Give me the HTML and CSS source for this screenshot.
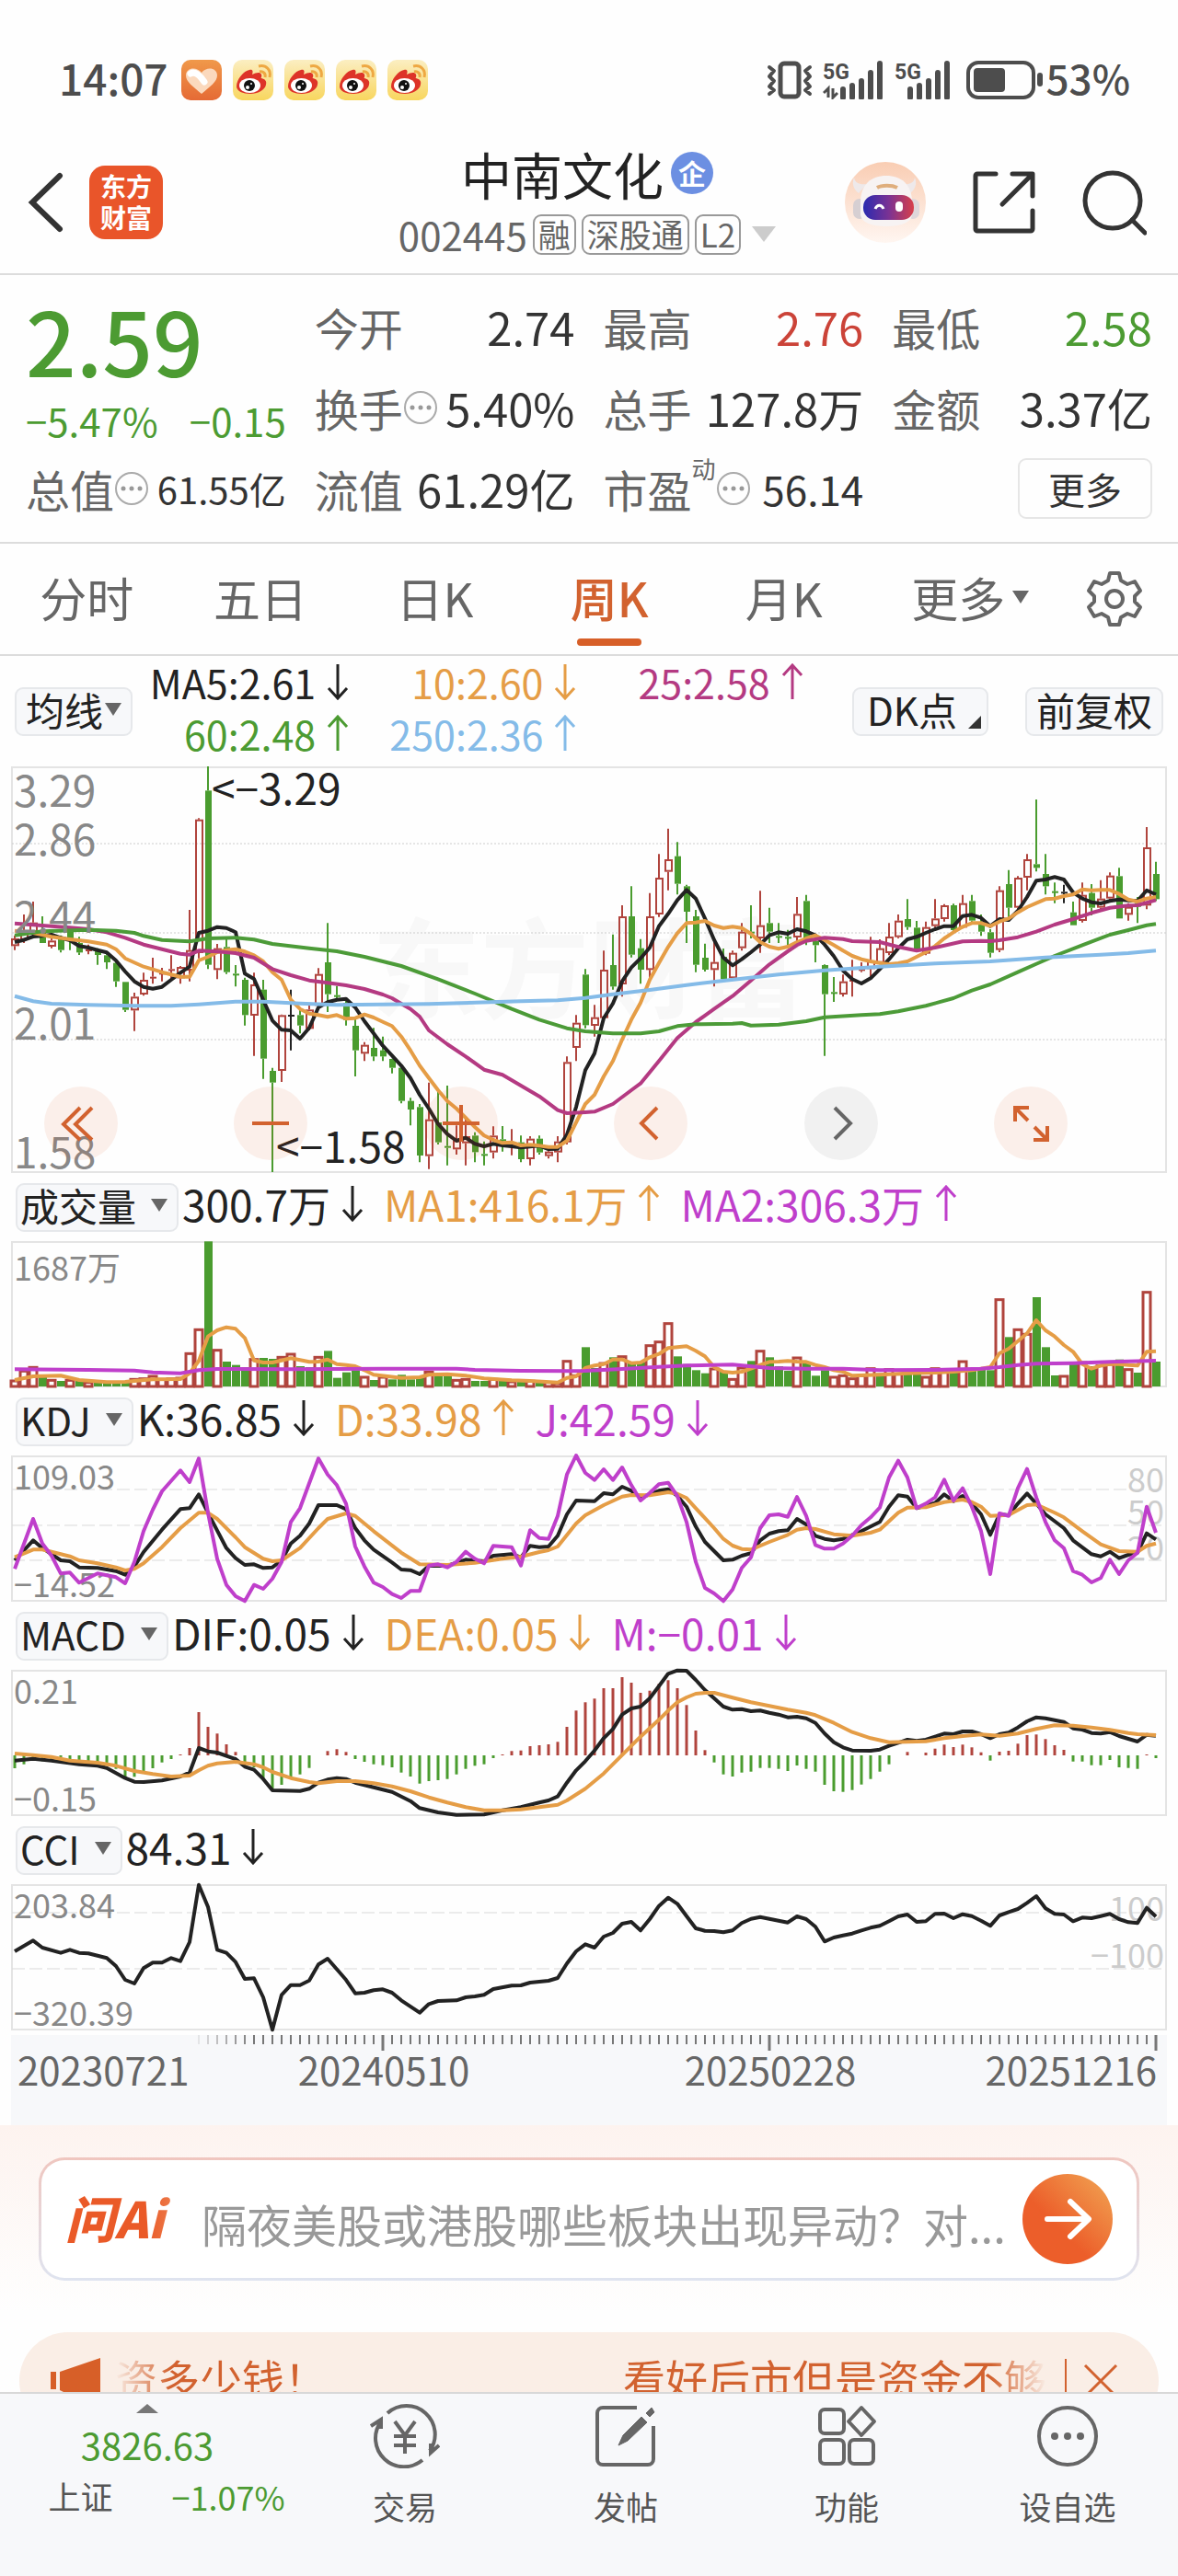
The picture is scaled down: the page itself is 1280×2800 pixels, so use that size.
FILE: index.html
```html
<!DOCTYPE html>
<html lang="zh-CN">
<head>
<meta charset="utf-8">
<meta name="viewport" content="width=device-width, initial-scale=1">
<title>中南文化 002445</title>
<link rel="stylesheet" href="styles.css">
</head>
<body>
<svg class="sprite" aria-hidden="true">
  <symbol id="up" viewBox="0 0 24 40"><path d="M12 39V2M2 13 12 2l10 11" fill="none" stroke="currentColor" stroke-width="3"/></symbol>
  <symbol id="down" viewBox="0 0 24 40"><path d="M12 1v37M2 27l10 11 10-11" fill="none" stroke="currentColor" stroke-width="3"/></symbol>
  <symbol id="tri" viewBox="0 0 18 14"><path d="M0 0h18L9 14z" fill="currentColor"/></symbol>
  <symbol id="info" viewBox="0 0 38 38"><circle cx="19" cy="19" r="17" fill="none" stroke="#aaa" stroke-width="2"/><g fill="#999"><circle cx="10" cy="19" r="2.5"/><circle cx="19" cy="19" r="2.5"/><circle cx="28" cy="19" r="2.5"/></g></symbol>
  <linearGradient id="wbBg" x1="0" y1="0" x2="0" y2="1"><stop offset="0" stop-color="#fbeec2"/><stop offset="1" stop-color="#f8d65e"/></linearGradient>
  <linearGradient id="heartBg" x1="0" y1="0" x2="0" y2="1"><stop offset="0" stop-color="#f0994a"/><stop offset="1" stop-color="#e56a35"/></linearGradient>
  <symbol id="weibo" viewBox="0 0 44 44">
    <rect width="44" height="44" rx="10" fill="url(#wbBg)"/>
    <path d="M4 29c0-8 8-17 14-18 4-1 4 2 3 5 4-2 9-3 10 0 1 2-1 4 0 4 4 1 6 3 5 7-1 6-9 10-17 10S4 34 4 29z" fill="#dd3328"/>
    <ellipse cx="18.500" cy="28" rx="11.500" ry="8" fill="#fff"/><circle cx="18" cy="28" r="6" fill="#111"/><circle cx="16" cy="30" r="2" fill="#fff"/><circle cx="20" cy="26" r="1" fill="#fff"/>
    <path d="M29 13c4-1 7 2 6 6M28 7c8-2 14 4 12 12" fill="none" stroke="#eea843" stroke-width="3"/>
  </symbol>
  <symbol id="bars" viewBox="0 0 50 42"><path d="M4 31v9M14 27v13M24 22v18M34 13v27M44 3v37" stroke="currentColor" stroke-width="6" stroke-linecap="round" fill="none"/></symbol>
</svg>

<div class="status">
  <span class="status-text">14:07</span>
  <span class="notices" aria-hidden="true">
    <svg viewBox="0 0 44 44"><rect width="44" height="44" rx="10" fill="url(#heartBg)"/><path d="M22 37C13 29 5 24 5 17c0-9 12-10 17-3 5-7 17-6 17 3 0 7-8 12-17 20z" fill="#fbd9bd"/><path d="M10 15c5-3 11 3 15 9" stroke="#fff" stroke-width="7" stroke-linecap="round" fill="none"/></svg>
    <svg viewBox="0 0 44 44"><use href="#weibo"/></svg>
    <svg viewBox="0 0 44 44"><use href="#weibo"/></svg>
    <svg viewBox="0 0 44 44"><use href="#weibo"/></svg>
    <svg viewBox="0 0 44 44"><use href="#weibo"/></svg>
  </span>
  <svg class="vibrate" viewBox="0 0 50 42" fill="none" stroke="currentColor" aria-hidden="true"><rect x="15" y="3" width="20" height="36" rx="4" stroke-width="5"/><path d="M3 7l5 4-5 6 5 5-5 6 5 4-5 4M47 7l-5 4 5 6-5 5 5 6-5 4 5 4" stroke-width="4" stroke-linecap="round" stroke-linejoin="round"/></svg>
  <svg class="signal" viewBox="0 0 67 42" aria-hidden="true"><text x="0" y="20" class="five">5G</text><use href="#bars" x="18" width="50" height="42"/><path d="M1 35l5-5v10M11 30v10l5-5" fill="none" stroke="currentColor" stroke-width="3"/></svg>
  <svg class="signal" viewBox="0 0 67 42" aria-hidden="true"><text x="0" y="20" class="five">5G</text><use href="#bars" x="13" width="50" height="42"/></svg>
  <svg class="battery" viewBox="0 0 84 42" aria-hidden="true"><rect x="2" y="2" width="71" height="38" rx="11" fill="none" stroke="currentColor" stroke-width="4"/><rect x="8" y="8" width="34" height="26" rx="4" fill="currentColor"/><rect x="77" y="13" width="6" height="15" rx="3" fill="currentColor"/></svg>
  <span class="status-text charge">53%</span>
</div>

<header class="top">
  <div class="top-left">
    <button class="icon-btn" aria-label="返回"><svg width="40" height="66" viewBox="0 0 40 66"><path d="M35 4 5 33l30 29" fill="none" stroke="#333" stroke-width="6" stroke-linecap="round"/></svg></button>
    <a class="brand" href="#">东方<br>财富</a>
  </div>
  <div class="title">
    <h1>中南文化 <span class="corp">企</span></h1>
    <p class="code"><span>002445</span><span class="tag">融</span><span class="tag">深股通</span><span class="tag">L2</span><svg width="26" height="17" viewBox="0 0 18 14" preserveAspectRatio="none"><use href="#tri"/></svg></p>
  </div>
  <div class="top-right">
    <button class="icon-btn" aria-label="智能助手"><svg width="88" height="88" viewBox="0 0 88 88">
      <defs><linearGradient id="rb" x1="0" y1="0" x2="0" y2="1"><stop offset="0" stop-color="#f9cdb3"/><stop offset="1" stop-color="#fff6f1"/></linearGradient><linearGradient id="vis"><stop offset="0" stop-color="#2a2bb0"/><stop offset=".5" stop-color="#7a3294"/><stop offset="1" stop-color="#d8404a"/></linearGradient></defs>
      <circle cx="44" cy="44" r="44" fill="url(#rb)"/>
      <path d="M10 17c-3 7 0 13 5 17l9-10c-8 1-13-1-14-7zM76 17c3 7 0 13-5 17l-9-10c8 1 13-1 14-7z" fill="#eee9ea"/>
      <rect x="9" y="40" width="14" height="22" rx="7" fill="#d6cfd2"/><rect x="67" y="40" width="14" height="22" rx="7" fill="#ded7da"/>
      <path d="M17 44c0-20 12-29 28-29s28 9 28 29v12c0 10-12 14-28 14s-28-4-28-14z" fill="#f7f3f3"/>
      <path d="M35 28c5-3 16-3 22 0" stroke="#dfae7d" stroke-width="4" fill="none"/>
      <rect x="20" y="36" width="55" height="27" rx="13" fill="url(#vis)"/>
      <path d="M33 51c2-5 7-5 9 0" fill="none" stroke="#fff" stroke-width="3"/><rect x="55" y="43" width="8" height="11" rx="4" fill="#fff"/>
    </svg></button>
    <button class="icon-btn" aria-label="分享"><svg width="70" height="70" viewBox="0 0 70 70" fill="none" stroke="#333" stroke-width="5" stroke-linecap="round" stroke-linejoin="round"><path d="M26 4H6a2 2 0 0 0-2 2v58a2 2 0 0 0 2 2h58a2 2 0 0 0 2-2V44M44 4h22v24M65 5 33 37"/></svg></button>
    <button class="icon-btn" aria-label="搜索"><svg width="70" height="72" viewBox="0 0 70 72" fill="none" stroke="#333" stroke-width="5"><circle cx="33" cy="34" r="30"/><path d="M54 55l14 14" stroke-linecap="round"/></svg></button>
  </div>
</header>

<section class="quote">
  <div class="price"><strong>2.59</strong><p><span>−5.47%</span><span>−0.15</span></p></div>
  <div class="cell"><span>今开</span><b>2.74</b></div>
  <div class="cell"><span>最高</span><b class="red">2.76</b></div>
  <div class="cell"><span>最低</span><b class="green">2.58</b></div>
  <div class="cell"><span>换手</span><svg class="info"><use href="#info"/></svg><b>5.40%</b></div>
  <div class="cell"><span>总手</span><b>127.8万</b></div>
  <div class="cell"><span>金额</span><b>3.37亿</b></div>
  <div class="cell"><span>总值</span><svg class="info"><use href="#info"/></svg><b class="small">61.55亿</b></div>
  <div class="cell"><span>流值</span><b>61.29亿</b></div>
  <div class="cell"><span>市盈</span><sup>动</sup><svg class="info"><use href="#info"/></svg><b class="mid">56.14</b></div>
  <div class="cell"><button class="more">更多</button></div>
</section>

<nav class="tabs">
  <a href="#">分时</a><a href="#">五日</a><a href="#">日K</a><a href="#" class="active" aria-current="page">周K</a><a href="#">月K</a>
  <a href="#">更多<svg class="tri"><use href="#tri"/></svg></a>
  <button class="icon-btn" aria-label="设置"><svg width="62" height="62" viewBox="0 0 62 62" fill="none" stroke="#666" stroke-width="4" stroke-linejoin="round"><path d="M26 3h10l2 8 7 4 8-3 6 10-6 6v6l6 6-6 10-8-3-7 4-2 8H26l-2-8-7-4-8 3-6-10 6-6v-6l-6-6 6-10 8 3 7-4z"/><circle cx="31" cy="31" r="9"/></svg></button>
</nav>

<main class="charts">
  <div class="ma-bar">
    <button class="pill">均线<svg class="tri"><use href="#tri"/></svg></button>
    <div class="ma-grid">
      <span class="v">MA5:2.61<svg><use href="#down"/></svg></span><span class="v orange">10:2.60<svg><use href="#down"/></svg></span><span class="v magenta">25:2.58<svg><use href="#up"/></svg></span>
      <span class="v green">60:2.48<svg><use href="#up"/></svg></span><span class="v blue">250:2.36<svg><use href="#up"/></svg></span>
    </div>
    <button class="pill dk">DK点<svg class="corner" viewBox="0 0 14 14"><path d="M14 0v14H0z" fill="#333"/></svg></button>
    <button class="pill">前复权</button>
  </div>

  <div class="kline">
    <svg class="plot" id="kline" viewBox="12 833 1256 442" role="img" aria-label="周K线"></svg>
    <div class="tools">
      <button aria-label="最早"><svg viewBox="0 0 80 80"><path d="M39 23 21 41l18 17M52 23 34 41l18 17"/></svg></button>
      <button aria-label="缩小"><svg viewBox="0 0 80 80"><path d="M20 40h40"/></svg></button>
      <button aria-label="放大"><svg viewBox="0 0 80 80"><path d="M20 40h40M40 20v40"/></svg></button>
      <button aria-label="向前"><svg viewBox="0 0 80 80"><path d="M47 23 30 40l17 17"/></svg></button>
      <button class="off" aria-label="向后"><svg viewBox="0 0 80 80"><path d="M33 23l17 17-17 17"/></svg></button>
      <button aria-label="全屏"><svg viewBox="0 0 80 80"><path d="M38 23H23v15M23 23l14 14M43 58h15V43M58 58 44 44"/></svg></button>
    </div>
  </div>

  <div class="bar"><button class="pill">成交量<svg class="tri"><use href="#tri"/></svg></button>
    <span class="v">300.7万<svg><use href="#down"/></svg></span><span class="v orange">MA1:416.1万<svg><use href="#up"/></svg></span><span class="v purple">MA2:306.3万<svg><use href="#up"/></svg></span></div>
  <svg class="plot" id="vol" viewBox="12 1348 1256 159" role="img" aria-label="成交量"></svg>

  <div class="bar"><button class="pill">KDJ<svg class="tri"><use href="#tri"/></svg></button>
    <span class="v">K:36.85<svg><use href="#down"/></svg></span><span class="v orange">D:33.98<svg><use href="#up"/></svg></span><span class="v purple">J:42.59<svg><use href="#down"/></svg></span></div>
  <svg class="plot" id="kdj" viewBox="12 1581 1256 159" role="img" aria-label="KDJ"></svg>

  <div class="bar"><button class="pill">MACD<svg class="tri"><use href="#tri"/></svg></button>
    <span class="v">DIF:0.05<svg><use href="#down"/></svg></span><span class="v orange">DEA:0.05<svg><use href="#down"/></svg></span><span class="v purple">M:−0.01<svg><use href="#down"/></svg></span></div>
  <svg class="plot" id="macd" viewBox="12 1814 1256 159" role="img" aria-label="MACD"></svg>

  <div class="bar"><button class="pill">CCI<svg class="tri"><use href="#tri"/></svg></button>
    <span class="v">84.31<svg><use href="#down"/></svg></span></div>
  <svg class="plot" id="cci" viewBox="12 2047 1256 159" role="img" aria-label="CCI"></svg>
  <svg class="plot axis" id="axis" viewBox="12 2211 1256 98" role="img" aria-label="日期"></svg>
</main>

<section class="ask">
  <form class="ask-box">
    <label class="ask-logo" for="q">问Ai</label>
    <input id="q" type="text" placeholder="隔夜美股或港股哪些板块出现异动？对...">
    <button type="button" aria-label="提问"><svg width="98" height="98" viewBox="0 0 98 98"><path d="M27 49h44M52 30l20 19-20 19" fill="none" stroke="#fff" stroke-width="6" stroke-linecap="round" stroke-linejoin="round"/></svg></button>
  </form>
</section>

<aside class="promo">
  <svg class="horn" width="54" height="50" viewBox="0 0 54 50"><path d="M0 15h6v19H0zM10 15l44-15v50L32 42l-2 8H18v-11l-8-4z" fill="#d75f28"/></svg>
  <div class="ticker"><span>资多少钱！</span><span>看好后市但是资金不够</span></div>
  <button class="icon-btn close" aria-label="关闭"><svg width="38" height="38" viewBox="0 0 38 38"><path d="M2 2l34 34M36 2 2 36" stroke="#d2622f" stroke-width="3"/></svg></button>
</aside>

<nav class="dock">
  <a class="index" href="#"><svg width="24" height="10" viewBox="0 0 24 10"><path d="M12 0l12 10H0z" fill="#777"/></svg><span class="pts">3826.63</span><span class="row"><span>上证</span><span class="chg">−1.07%</span></span></a>
  <a href="#"><svg viewBox="0 0 76 70"><path d="M19 10a31 31 0 0 1 46 41M57 61A31 31 0 0 1 12 19M1 24l11-7v10M75 45l-9 8v-10M27 19l11 15 11-15M38 34v20M26 35h24M26 45h24"/></svg>交易</a>
  <a href="#"><svg viewBox="0 0 76 70"><path d="M50 4H13a6 6 0 0 0-6 6v50a6 6 0 0 0 6 6h49a6 6 0 0 0 6-6V24"/><path d="M30 45l5-11 20-20 6 6-21 20zM60 10l6-6 3 5-5 5z" fill="#666" stroke-width="1"/></svg>发帖</a>
  <a href="#"><svg viewBox="0 0 76 70"><rect x="9" y="6" width="26" height="26" rx="5"/><rect x="9" y="39" width="26" height="26" rx="5"/><rect x="41" y="39" width="26" height="26" rx="5"/><path d="M54 4l14 15-14 15-14-15z" stroke-linejoin="round"/></svg>功能</a>
  <a href="#"><svg viewBox="0 0 76 70"><circle cx="38" cy="35" r="31"/><g fill="#666" stroke="none"><circle cx="24" cy="35" r="4"/><circle cx="38" cy="35" r="4"/><circle cx="52" cy="35" r="4"/></g></svg>设自选</a>
</nav>
<script src="charts.js"></script>
</body>
</html>
```
FILE: styles.css
```css
* { box-sizing: border-box; }
body {
  margin: 0;
  padding-bottom: 120px;
  background: #fefefe;
  color: #222;
  font-family: "Noto Sans CJK SC", "Noto Sans", sans-serif;
  font-size: 44px;
}
a { color: inherit; text-decoration: none; }
button { font: inherit; color: inherit; padding: 0; border: 0; background: none; cursor: pointer; }
svg { display: block; flex: none; }
h1, p { margin: 0; font-weight: 400; }
.sprite { position: absolute; width: 0; height: 0; }
.icon-btn { display: flex; align-items: center; justify-content: center; }

.green { color: #4c9b32; }
.red { color: #cb4338; }
.orange { color: #e59d46; }
.magenta { color: #b43a82; }
.purple { color: #bf3fcb; }
.blue { color: #84bbe8; }

/* system status */
.status { display: flex; align-items: center; height: 142px; padding: 32px 52px 0 64px; color: #4d4d4d; }
.status-text { font-size: 46px; line-height: 52px; padding-bottom: 6px; font-weight: 500; }
.charge { font-size: 44px; }
.notices { display: flex; gap: 12px; margin: 0 auto 0 14px; }
.notices svg { width: 44px; height: 44px; }
.vibrate { width: 50px; height: 42px; }
.signal { width: 67px; height: 42px; margin-left: 11px; }
.five { font: 700 23px Roboto, sans-serif; fill: currentColor; }
.battery { width: 84px; height: 42px; margin: 0 3px 0 11px; }

/* header */
.top { display: grid; grid-template-columns: 1fr auto 1fr; align-items: center; height: 157px; padding: 0 34px 0 30px; border-bottom: 2px solid #dcdcdc; }
.top-left { display: flex; align-items: center; gap: 27px; }
.brand { display: block; width: 80px; height: 80px; padding-top: 5px; border-radius: 17px; background: #e9552a; color: #fff; font-size: 28px; line-height: 34px; font-weight: 700; text-align: center; }
.title { display: flex; flex-direction: column; align-items: center; }
.title h1 { display: flex; align-items: center; gap: 8px; font-size: 55px; line-height: 66px; font-weight: 400; }
.corp { width: 46px; height: 46px; border-radius: 50%; background: #6c8fe2; color: #fff; font-size: 30px; line-height: 44px; font-weight: 700; text-align: center; }
.code { display: flex; align-items: center; gap: 6px; height: 60px; margin-top: 4px; font-size: 42px; line-height: 54px; color: #666; }
.tag { height: 44px; padding: 0 4px; border: 2px solid #999; border-radius: 9px; font-size: 35px; line-height: 38px; }
.code svg { margin-left: 6px; color: #ccc; }
.top-right { display: flex; align-items: center; justify-content: flex-end; gap: 50px; }

/* quote */
.quote { display: grid; grid-template-columns: repeat(4, 1fr); grid-auto-rows: 88px; column-gap: 31px; padding: 12px 28px 14px; border-bottom: 2px solid #dcdcdc; }
.price { grid-row: span 2; color: #4c9b32; }
.price strong { display: block; font-size: 96px; line-height: 116px; font-weight: 500; }
.price p { display: flex; justify-content: space-between; font-size: 42px; line-height: 60px; }
.cell { display: flex; align-items: center; font-size: 48px; line-height: 60px; color: #666; }
.cell b { margin-left: auto; font-size: 49px; font-weight: 400; color: #333; }
.cell b.red { color: #cb4338; }
.cell b.green { color: #4c9b32; }
.cell b.small { font-size: 40px; }
.cell b.mid { font-size: 44px; }
.cell sup { align-self: flex-start; font-size: 26px; line-height: 44px; }
.info { width: 38px; height: 38px; }
.more { margin-left: auto; width: 146px; height: 66px; border: 2px solid #e6e6e6; border-radius: 9px; font-size: 40px; line-height: 58px; color: #333; }

/* period tabs */
.tabs { display: grid; grid-template-columns: 188fr 188fr 190fr 188fr 190fr 214fr 98fr; height: 122px; padding-right: 20px; border-bottom: 2px solid #dcdcdc; }
.tabs a { position: relative; display: flex; align-items: center; justify-content: center; gap: 8px; padding-bottom: 4px; font-size: 51px; color: #666; }
.tabs .active { color: #d2622f; font-weight: 500; }
.tabs .active::after { content: ""; position: absolute; left: 50%; bottom: 9px; width: 70px; height: 8px; margin-left: -35px; border-radius: 4px; background: #d75f28; }
.tri { width: 18px; height: 14px; color: #666; }

/* chart headers */
.charts { padding: 0 12px; }
.pill { display: flex; align-items: center; justify-content: space-between; height: 53px; padding: 0 10px 5px 3px; border: 2px solid #e6e8eb; border-radius: 9px; background: #f7f8fa; font-size: 42px; line-height: 44px; white-space: nowrap; gap: 16px; }
.v { display: flex; align-items: center; gap: 12px; padding-bottom: 8px; white-space: nowrap; font-size: 46px; line-height: 56px; }
.v svg { width: 24px; height: 40px; }
.ma-bar { display: flex; align-items: center; height: 120px; padding: 0 4px; }
.ma-bar .pill { padding: 0 10px 5px; gap: 2px; }
.ma-bar .dk { position: relative; margin: 0 40px 0 auto; padding-right: 32px; padding-left: 14px; }
.corner { position: absolute; right: 6px; bottom: 6px; width: 14px; height: 14px; }
.ma-grid { flex: 1; display: grid; grid-template-columns: 234fr 246fr 245fr 53fr; grid-template-rows: 56px 56px; }
.ma-grid .v { justify-content: flex-end; font-size: 43px; line-height: 50px; }
.ma-grid .v:nth-child(4) { grid-area: 2 / 1; }
.ma-grid .v:nth-child(5) { grid-area: 2 / 2; }
.bar { display: flex; align-items: center; gap: 22px; height: 74px; padding-left: 5px; }
.bar .pill { margin-right: -18px; }

/* plots */
.plot { width: 100%; height: auto; overflow: visible; }
.kline { position: relative; }
.tools { position: absolute; left: 0; right: 0; bottom: 14px; display: flex; justify-content: space-between; padding: 0 108px 0 36px; }
.tools button { width: 80px; height: 80px; border-radius: 50%; background: rgba(217, 94, 38, .09); }
.tools svg { width: 80px; height: 80px; fill: none; stroke: #d2622f; stroke-width: 4; }
.tools .off { background: rgba(0, 0, 0, .05); }
.tools .off svg { stroke: #666; }
.frame { fill: none; stroke: #e4e4e4; stroke-width: 2; }
.dots { stroke: #ccc; stroke-width: 1; stroke-dasharray: 2 2; }
.dash { stroke: #d9d9d9; stroke-width: 1; stroke-dasharray: 14 5; }
.mark { font-size: 118px; font-weight: 700; fill: #f8f8f8; }
.lab { font-size: 46px; fill: #888; }
.lab-s { font-size: 36px; fill: #888; }
.lab-r { font-size: 36px; fill: #ccc; text-anchor: end; }
.note { font-size: 46px; fill: #222; }
.line { fill: none; stroke-width: 4; stroke-linejoin: round; }
.axis { margin-top: 5px; background: #f7f8fa; }
.date { font-size: 42px; fill: #666; }

/* question box */
.ask { padding: 35px 42px 56px; background: linear-gradient(#fdf3ef, #fefefe 90%); }
.ask-box { display: flex; align-items: center; height: 134px; padding: 0 26px; border: 3px solid transparent; border-radius: 28px; background: linear-gradient(#fff, #fff) padding-box, linear-gradient(#efc6bf, #dfe4f0) border-box; }
.ask-logo { width: 148px; padding-bottom: 4px; font-size: 54px; line-height: 64px; font-weight: 900; font-style: italic; color: transparent; background: linear-gradient(90deg, #ea5a28 60%, #f0a070); background-clip: text; -webkit-background-clip: text; }
.ask-box input { flex: 1; min-width: 0; height: 80px; padding: 8px 0 0; border: 0; outline: 0; background: none; font: inherit; font-size: 49px; color: #333; }
.ask-box input::placeholder { color: #999; opacity: 1; }
.ask-box button { width: 98px; height: 98px; border-radius: 50%; background: linear-gradient(225deg, #f0954a 15%, #ec5e2a 60%); }

/* promo */
.promo { display: flex; align-items: center; height: 106px; margin: 0 21px; padding: 0 44px 0 34px; border-radius: 53px; background: #faeee6; color: #d2622f; }
.ticker { flex: 1; display: flex; justify-content: space-between; margin-left: 16px; padding-bottom: 8px; font-size: 46px; line-height: 60px; white-space: nowrap; -webkit-mask-image: linear-gradient(90deg, transparent, #000 60px, #000 calc(100% - 60px), transparent); mask-image: linear-gradient(90deg, transparent, #000 60px, #000 calc(100% - 60px), transparent); }
.close { height: 48px; margin-left: 20px; padding-left: 18px; border-left: 2px solid #d2622f; }

/* bottom dock */
.dock { position: fixed; left: 0; right: 0; bottom: 0; display: grid; grid-template-columns: 4fr 3fr 3fr 3fr 3fr; height: 200px; border-top: 2px solid #d8d8d8; background: #f7f8fa; color: #555; }
.dock a { display: flex; flex-direction: column; align-items: center; padding-top: 11px; font-size: 35px; line-height: 44px; }
.dock a > svg { width: 76px; height: 70px; margin-bottom: 19px; fill: none; stroke: #666; stroke-width: 4; }
.dock .index > svg { width: 24px; height: 10px; margin: 0; stroke: none; }
.pts { margin-top: 7px; font-size: 40px; line-height: 54px; color: #4c9b32; }
.row { display: flex; align-items: center; gap: 64px; margin-left: 42px; line-height: 58px; }
.chg { font-size: 36px; color: #4c9b32; }
```
FILE: charts.js
```js
const RED = '#b0443d', GREEN = '#4a9c2f', BLACK = '#222', ORANGE = '#e59d46', PURPLE = '#bf3fcb';
const x = i => 16 + 10 * i;
const put = (id, html) => { document.getElementById(id).innerHTML = html; };
const text = (cls, tx, ty, s) => `<text class="${cls}" x="${tx}" y="${ty}">${s}</text>`;
const hline = (cls, y) => `<path class="${cls}" d="M13 ${y}H1267"/>`;
const frame = (y, h) => `<rect class="frame" x="13" y="${y + 1}" width="1254" height="${h - 2}"/>`;

// Each series is "index,level;..." with levels in thirds of a unit below the origin.
const line = (data, origin, color) => {
  const pts = data.split(';').map(p => { const [i, v] = p.split(',').map(Number); return `${x(i)},${(origin + v / 3).toFixed(1)}`; });
  return `<polyline class="line" stroke="${color}" points="${pts.join(' ')}"/>`;
};

// Weekly candles: type (r rise, g fall, k flat), high, body top, body bottom, low.
const candles = `r590,600,625,638 r522,575,605,615 r480,548,580,600 g528,575,615,615 r595,607,627,632 g590,600,638,646 g570,575,600,638 g595,615,646,654 r620,635,642,652 g632,640,654,686 g645,655,678,700 g670,680,740,758 g742,742,833,840 r777,790,835,902 r712,735,783,787 r663,725,727,748 r696,712,714,740 r655,700,704,735 r690,693,730,748 r507,638,705,740 r208,212,648,665 g39,118,686,700 r618,632,703,733 g603,628,710,716 g687,715,719,757 g728,735,850,884 r712,750,852,983 g735,767,992,1058 g1022,1032,1070,1362 r848,850,1032,1068 k767,849,853,965 g830,850,884,910 r810,832,895,900 r697,716,820,830 g550,678,782,840 g755,785,789,797 g795,810,866,884 g862,885,965,1050 r938,947,976,1000 g892,957,985,1000 g920,965,985,1000 g992,993,1022,1040 g1012,1022,1130,1138 g1120,1130,1158,1210 g1140,1150,1308,1330 r1070,1190,1310,1352 g1095,1200,1265,1272 g1080,1277,1283,1340 r1210,1258,1288,1305 r1190,1245,1268,1340 g1232,1243,1297,1330 g1262,1303,1308,1340 r1213,1243,1298,1318 g1212,1255,1258,1295 r1222,1268,1272,1307 g1243,1265,1320,1330 r1245,1253,1320,1340 g1243,1253,1298,1305 r1290,1295,1310,1318 r1245,1262,1298,1330 r985,1003,1265,1272 r850,875,957,1000 g700,718,883,893 r817,857,885,920 r640,702,860,865 g587,687,757,767 r492,528,750,790 g430,528,653,662 g602,632,702,748 r452,528,703,733 r325,402,522,530 r242,342,383,443 g286,332,422,457 g425,430,513,615 g507,528,686,710 g617,663,702,708 r600,677,703,757 g633,660,733,738 r640,647,730,732 r550,578,632,640 g492,578,583,600 r445,557,600,647 g500,550,578,615 g550,592,595,615 g572,595,600,632 r465,520,597,612 g458,478,603,622 g595,608,622,678 g685,687,782,983 g726,775,779,807 r718,740,783,790 r670,735,738,790 r678,700,706,710 r595,672,700,725 r603,632,680,685 r550,594,648,655 r522,542,596,600 g472,537,563,572 g543,565,638,640 r545,563,650,655 r472,535,560,565 r488,492,537,545 g487,492,573,585 r458,485,565,568 g458,478,542,550 g522,548,578,592 g570,580,647,662 r430,443,638,645 g377,423,500,540 r397,402,500,510 r325,342,402,443 g147,358,370,382 g325,390,430,457 g418,446,450,485 k425,448,452,485 g480,515,557,557 r418,458,543,548 g423,452,500,525 r410,470,500,510 r385,395,470,478 g370,397,535,535 r485,497,523,542 g465,485,497,550 r237,303,493,505 g350,390,472,478`.split(' ');

const drawCandle = (c, i) => {
  const color = { r: RED, g: GREEN, k: BLACK }[c[0]];
  const [hi, top, bot, lo] = c.slice(1).split(',').map(v => 820 + v / 3);
  const h = bot - top, cx = x(i);
  const wick = `<path d="M${cx} ${hi}V${top}M${cx} ${bot}V${lo}" stroke="${color}" stroke-width="2"/>`;
  const body = c[0] === 'r' && h > 4
    ? `<rect x="${cx - 3}" y="${top + 1}" width="7" height="${h - 2}" fill="none" stroke="${color}" stroke-width="2"/>`
    : `<rect x="${cx - 3}" y="${top}" width="7" height="${Math.max(h, 2)}" fill="${color}"/>`;
  return wick + body;
};

put('kline',
  text('mark', 404, 1098, '东方财富') + frame(833, 442) + [917, 1014, 1130].map(y => hline('dots', y)).join('') +
  candles.map(drawCandle).join('') +
  line('0,612;1,605;2,594;3,592;4,588;5,598;6,606;7,625;8,630;9,638;10,646;11,672;12,708;13,740;14,758;15,764;16,758;17,735;18,712;19,692;20,582;21,575;22,563;23,566;24,580;25,715;26,732;27,800;28,868;29,898;30,900;31,927;32,892;33,825;34,808;35,800;36,797;37,825;38,870;39,910;40,950;41,982;42,1015;43,1055;44,1110;45,1155;46,1205;47,1238;48,1260;49,1250;50,1270;51,1278;52,1270;53,1275;54,1278;55,1282;57,1276;58,1287;59,1286;60,1240;61,1150;62,1030;63,975;64,860;65,812;66,740;67,695;68,665;69,630;70,560;71,520;72,475;73,442;74,470;75,535;76,605;77,663;78,688;79,668;80,645;81,620;82,590;83,580;84,585;85,570;86,577;87,590;88,620;89,658;90,705;91,733;92,747;93,730;94,700;95,668;96,632;97,603;98,595;99,582;100,570;101,560;102,560;103,527;104,523;105,533;106,560;107,537;108,540;109,510;110,465;111,412;112,408;113,400;114,408;115,450;116,470;117,482;118,486;119,478;120,473;121,476;122,478;123,443;124,457', 820, BLACK) +
  line('0,575;2,582;4,595;6,603;8,610;10,620;11,635;12,665;14,692;16,710;18,725;19,725;20,672;21,660;22,645;23,638;24,635;25,643;26,655;27,675;28,710;29,735;30,800;31,830;32,845;33,850;34,856;35,850;36,862;37,860;38,848;39,858;40,872;41,886;42,920;43,965;44,1015;45,1055;46,1095;47,1130;48,1155;49,1185;50,1215;51,1243;52,1257;53,1267;54,1265;55,1275;56,1273;57,1276;58,1280;59,1280;60,1260;61,1200;62,1140;63,1110;64,1050;65,1000;66,930;67,865;68,810;69,735;70,680;71,628;72,583;73,550;74,548;75,543;76,558;77,566;78,562;79,566;80,585;81,612;82,627;83,634;84,627;85,612;86,600;87,590;88,605;89,622;90,640;91,657;92,668;93,675;94,680;95,684;96,681;97,675;98,660;99,645;100,625;101,600;102,580;103,562;104,550;105,550;106,560;107,545;108,535;109,515;110,498;111,485;112,472;113,470;114,462;115,457;116,440;117,443;118,442;119,442;120,455;121,473;122,480;123,470;124,465', 820, ORANGE) +
  line('0,551;3,558;6,565;8,570;10,580;12,598;14,620;16,635;18,650;19,653;20,640;22,643;24,648;26,663;28,700;30,720;32,737;34,745;36,753;38,765;40,783;41,795;42,813;43,830;44,855;45,900;47,945;49,985;51,1028;53,1045;55,1080;57,1115;59,1160;60,1170;62,1167;63,1165;65,1140;67,1095;68,1073;70,1000;72,925;74,873;76,830;78,788;80,737;82,685;84,642;85,622;86,608;88,598;90,602;91,609;94,612;96,628;98,640;100,630;103,610;105,608;106,609;107,606;109,596;111,578;113,555;115,537;117,517;119,500;121,493;122,492;124,475', 820, '#b43a82') +
  line('0,590;3,577;8,572;11,575;13,582;14,592;16,605;19,610;21,600;24,598;26,604;28,618;32,632;35,642;38,660;42,690;46,733;50,780;54,830;57,865;60,893;62,903;65,910;68,910;70,903;72,886;74,880;78,878;79,876;80,884;83,881;86,870;88,857;92,850;94,847;96,838;99,820;102,795;104,770;106,750;109,710;111,683;113,657;116,622;119,588;121,573;123,557;124,553', 820, '#4c9b38') +
  line('0,788;2,805;4,813;8,817;13,820;17,820;20,815;24,806;27,806;31,812;35,817;45,814;55,805;59,802;62,794;65,782;69,768;73,752;77,738;83,718;88,704;94,692;100,682;106,675;112,662;118,653;121,648;124,640', 820, '#84bbe8') +
  [['3.29', 877], ['2.86', 930], ['2.44', 1014], ['2.01', 1130], ['1.58', 1270]].map(([s, y]) => text('lab', 15, y, s)).join('') +
  text('note', 230, 875, '&lt;−3.29') + text('note', 300, 1264, '&lt;−1.58'));

// Volume bars: type and level of the bar top.
const volume = 'r657 r625 r613 g640 r655 g660 r655 g660 r662 g664 g666 g666 g666 r652 r650 r642 r652 r650 r648 r568 r490 g205 r557 g597 g608 g615 r587 g585 g588 r580 r570 g612 g615 r580 g562 g650 g632 g625 r645 g657 r645 g655 g640 g655 g645 r628 g643 g642 r655 r652 g660 g660 r652 g660 r660 g663 r658 g665 r662 r665 r593 r640 g550 g618 r600 g583 r578 g600 g600 r542 r530 r470 g580 g605 g625 g635 r618 g630 r652 r615 g595 r560 g583 g612 g627 r582 g597 g643 g625 r645 r640 r650 r640 r617 g635 r620 r635 g637 g630 r645 r617 r620 g625 r594 g618 g620 g625 r392 g517 r490 r505 g387 g550 g642 r642 g605 r597 g612 r608 r603 g590 r620 g633 r368 g597'.split(' ');
put('vol',
  frame(1348, 159) + volume.map((b, i) => {
    const y = 1280 + b.slice(1) / 3, h = 1506 - y;
    return b[0] === 'r'
      ? `<rect x="${x(i) - 4}" y="${y + 1}" width="8" height="${h - 1}" fill="#fff" stroke="${RED}" stroke-width="3"/>`
      : `<rect x="${x(i) - 4}" y="${y}" width="9" height="${h}" fill="${GREEN}"/>`;
  }).join('') +
  line('0,657;2,645;5,643;7,657;10,664;12,663;13,660;15,655;18,654;19,635;20,595;21,515;22,495;23,485;24,490;25,520;26,593;27,600;28,600;29,593;30,586;31,592;32,598;33,597;34,590;35,605;36,608;37,612;38,625;39,640;42,650;44,648;45,640;47,638;49,643;51,652;54,658;56,660;59,665;60,650;61,645;62,618;63,610;64,605;65,590;66,590;67,602;68,600;69,583;70,572;71,553;72,550;73,547;74,562;75,580;76,615;77,630;78,633;79,630;80,620;81,608;82,598;83,597;84,595;85,597;86,598;87,608;88,615;89,625;90,630;91,643;94,640;97,635;100,633;102,630;104,625;105,620;106,615;107,570;108,555;109,530;110,505;111,462;112,495;113,515;114,543;115,565;116,605;117,620;118,610;119,605;120,605;121,608;122,610;123,565;124,563', 1280, ORANGE) +
  line('0,622;8,624;13,626;15,632;18,635;20,625;22,621;30,622;40,620;48,620;50,624;55,627;60,628;62,627;66,621;70,614;73,610;78,607;82,618;86,620;90,620;94,625;100,624;105,620;107,615;109,608;111,604;115,602;119,598;124,594', 1280, PURPLE) +
  text('lab-s', 15, 1391, '1687万'));

put('kdj',
  frame(1581, 159) + [1618, 1657, 1695].map(y => hline('dash', y)).join('') +
  text('lab-r', 1265, 1621, '80') + text('lab-r', 1265, 1656, '50') + text('lab-r', 1265, 1695, '20') +
  text('lab-s', 15, 1618, '109.03') + text('lab-s', 15, 1735, '−14.52') +
  line('0,555;2,490;3,515;5,555;6,558;7,578;9,580;11,590;12,602;13,575;14,528;16,455;18,388;19,385;20,340;21,400;22,458;23,515;24,548;25,570;26,568;27,580;28,578;29,555;30,500;31,475;32,435;33,375;35,375;36,388;37,450;38,490;39,520;41,562;42,585;43,587;44,600;45,573;47,573;49,553;51,558;52,540;54,535;55,545;56,508;57,512;58,510;59,475;60,405;61,360;63,362;64,336;65,340;66,315;67,328;68,350;69,340;70,328;71,323;72,345;73,380;74,445;75,495;76,525;77,555;78,553;79,540;80,532;81,490;82,468;83,460;84,457;85,420;86,438;87,475;88,485;89,490;90,485;92,460;94,430;95,380;96,343;97,347;98,385;100,368;101,340;102,362;103,345;104,370;105,405;106,472;107,405;108,408;109,370;110,337;111,370;112,405;114,450;115,490;117,535;118,542;119,527;120,548;121,537;122,530;123,467;124,487', 1510, BLACK) +
  line('0,545;2,520;3,520;5,535;6,542;7,555;9,565;11,578;12,588;13,583;14,565;16,512;18,450;20,400;21,400;22,420;24,480;25,512;27,550;28,558;29,555;31,515;33,450;34,420;36,402;37,410;39,460;42,530;44,568;47,570;50,563;53,550;55,543;57,528;58,522;59,510;61,435;62,408;64,375;66,347;67,342;69,343;71,333;72,338;73,352;74,385;76,450;77,485;78,507;79,518;80,520;82,495;84,472;85,455;86,450;87,453;89,470;91,475;93,465;94,455;96,400;97,383;99,382;101,365;103,357;104,365;105,380;106,410;108,407;110,375;111,373;113,400;114,415;116,460;118,503;120,525;122,527;123,508;124,500', 1510, ORANGE) +
  line('0,583;2,420;3,500;4,540;5,598;6,595;7,628;9,598;11,610;12,630;13,560;14,460;15,390;16,330;18,262;19,300;20,223;21,400;22,550;23,635;24,672;25,688;26,635;27,648;28,615;29,560;30,430;31,385;33,223;34,275;35,310;36,370;37,510;38,575;39,628;40,642;41,665;42,678;43,655;44,655;45,572;46,568;47,578;48,560;49,527;50,550;51,565;52,508;53,510;54,512;55,572;56,457;57,482;58,485;59,410;60,275;61,213;62,270;63,293;64,258;65,293;66,252;67,310;68,360;69,335;70,307;71,302;72,345;73,430;74,560;75,645;76,663;77,688;78,650;79,580;80,545;81,450;82,408;83,405;84,413;85,348;86,410;87,505;88,517;89,517;90,500;91,475;92,440;93,415;94,383;95,285;96,230;97,285;98,385;99,370;100,350;101,292;102,360;103,320;104,380;105,460;106,600;107,402;108,410;109,320;110,257;111,350;112,430;113,490;114,515;115,590;116,602;117,627;118,613;119,553;120,600;121,555;122,530;123,380;124,465', 1510, PURPLE));

// MACD histogram levels; 471 is the zero line.
const hist = [513,500,488,490,487,487,490,492,492,492,500,515,543,541,528,513,494,483,468,447,330,378,400,435,460,505,510,545,582,567,548,533,512,471,457,451,460,483,492,500,503,510,527,540,563,555,552,548,533,515,505,500,480,468,457,455,441,438,435,427,378,325,298,286,252,252,216,234,267,260,238,226,252,307,390,454,494,533,540,527,524,512,512,515,522,504,515,524,567,588,590,584,566,548,524,500,471,460,471,462,449,436,444,436,445,461,488,459,456,433,405,403,418,438,453,491,491,503,503,486,510,512,515,468,480];
put('macd',
  frame(1814, 159) +
  hist.map((v, i) => `<path d="M${x(i)} 1907V${(1750 + v / 3).toFixed(1)}" stroke="${v < 471 ? RED : GREEN}" stroke-width="3"/>`).join('') +
  line('0,488;2,482;4,488;7,500;9,505;10,512;12,545;13,557;14,558;16,553;18,540;19,527;20,447;21,458;22,462;24,483;25,508;26,518;27,548;28,585;31,587;32,580;33,560;34,550;35,545;36,548;37,560;39,575;41,590;43,620;44,643;46,657;48,665;51,664;53,650;55,640;57,625;58,618;59,605;60,560;61,520;62,490;63,455;64,415;65,385;66,338;67,318;68,312;69,285;70,245;71,205;72,194;73,195;74,225;75,258;76,285;77,312;78,322;79,320;80,327;81,325;82,332;83,338;84,347;85,345;86,350;87,365;88,400;89,428;90,445;91,455;93,456;94,452;95,440;96,430;97,420;98,424;99,420;100,410;101,400;102,402;103,393;104,393;105,402;106,415;107,402;108,397;109,380;110,360;111,347;112,350;114,362;115,383;116,387;117,398;118,400;119,395;120,408;121,417;122,426;123,404;124,407', 1750, BLACK) +
  line('0,465;2,470;4,476;6,488;9,495;11,505;13,522;15,532;17,540;19,537;20,520;21,505;22,497;24,492;26,500;27,510;28,525;30,545;32,558;33,562;35,555;37,555;39,562;41,572;43,588;45,608;47,625;49,640;51,650;53,650;55,647;57,640;59,632;60,618;62,580;64,530;66,470;68,410;70,355;71,325;72,298;73,282;74,270;75,267;76,267;78,283;80,298;82,310;84,322;86,332;87,340;89,365;91,395;93,415;95,428;97,427;99,425;101,415;103,408;105,403;107,407;109,400;111,385;113,373;115,374;117,380;119,388;121,398;122,402;124,405', 1750, ORANGE) +
  text('lab-s', 15, 1851, '0.21') + text('lab-s', 15, 1968, '−0.15'));

put('cci',
  frame(2047, 159) + hline('dash', 2078) + hline('dash', 2139) +
  text('lab-r', 1265, 2087, '100') + text('lab-r', 1265, 2138, '−100') +
  text('lab-s', 15, 2084, '203.84') + text('lab-s', 15, 2201, '−320.39') +
  line('0,420;2,385;3,408;5,425;6,415;7,425;8,427;10,442;11,468;12,513;13,525;14,475;15,457;16,457;17,442;18,452;19,390;20,203;21,275;22,415;23,425;24,455;25,510;26,508;27,570;28,676;29,562;30,530;31,530;32,515;33,463;34,444;36,513;37,557;38,555;39,547;40,544;41,555;42,580;44,620;45,592;46,582;48,580;49,570;50,567;51,562;52,543;54,532;55,531;56,522;58,516;59,507;60,460;61,420;62,397;63,408;64,372;65,360;66,330;67,324;68,352;69,315;70,272;71,245;72,265;73,305;74,345;75,353;76,354;77,358;78,352;79,328;80,314;81,308;82,314;84,326;85,306;86,315;87,340;88,388;89,375;90,368;91,362;92,352;93,343;94,337;95,322;96,306;97,300;98,324;99,322;100,298;101,297;102,312;103,299;104,305;105,320;106,337;107,303;108,292;109,282;110,262;111,240;112,280;113,298;114,300;115,322;116,310;117,312;118,305;119,298;120,315;121,325;122,328;123,278;124,307', 1980, BLACK));

let ticks = '';
for (let i = 20; i <= 124; i++) {
  const major = [40, 82, 124].includes(i);
  ticks += `<path d="M${x(i)} 2211v${major ? 17 : 10}" stroke="#777" stroke-width="${major ? 3 : 2}" opacity="${Math.min(1, (i - 19) / 7)}"/>`;
}
put('axis', ticks + text('date', 19, 2266, '20230721') + text('date" text-anchor="middle', 417, 2266, '20240510') +
  text('date" text-anchor="middle', 837, 2266, '20250228') + text('date" text-anchor="end', 1257, 2266, '20251216'));
```
